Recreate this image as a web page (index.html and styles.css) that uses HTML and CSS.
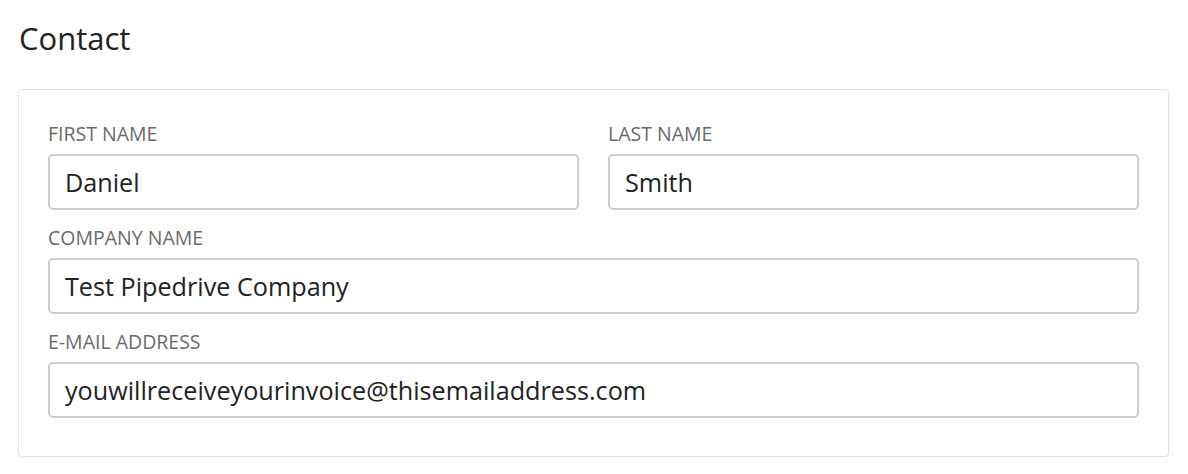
FILE: index.html
```html
<!DOCTYPE html>
<html>
<head>
<meta charset="utf-8">
<link rel="stylesheet" href="styles.css">
</head>
<body>
<div class="page">
  <h2 class="title">Contact</h2>
  <div class="card">
    <div class="row">
      <div class="field">
        <label class="label">FIRST NAME</label>
        <div class="input">Daniel</div>
      </div>
      <div class="field">
        <label class="label">LAST NAME</label>
        <div class="input">Smith</div>
      </div>
    </div>
    <div class="field">
      <label class="label">COMPANY NAME</label>
      <div class="input">Test Pipedrive Company</div>
    </div>
    <div class="field">
      <label class="label">E-MAIL ADDRESS</label>
      <div class="input">youwillreceiveyourinvoice@thisemailaddress.com</div>
    </div>
  </div>
</div>
</body>
</html>
```
FILE: styles.css
```css
html, body {
  margin: 0;
  padding: 0;
  background: #ffffff;
}
body {
  font-family: "Open Sans", "Noto Sans", sans-serif;
  color: #222222;
}
.page {
  padding: 18px 19px 0 18px;
}
.title {
  margin: 0 0 31px 1px;
  font-size: 31px;
  line-height: 40px;
  font-weight: 400;
  color: #222222;
}
.card {
  width: 1151px;
  box-sizing: border-box;
  border: 1px solid #dfe2e6;
  border-radius: 4px;
  box-shadow: 0 1px 2px rgba(0, 0, 0, 0.06);
  padding: 32px 29px 38px 29px;
  display: flex;
  flex-direction: column;
  gap: 16px;
}
.row {
  display: flex;
  gap: 29px;
}
.row .field {
  flex: 1;
}
.field {
  display: flex;
  flex-direction: column;
}
.label {
  font-size: 19.5px;
  line-height: 24px;
  color: #6a6a6a;
  margin-bottom: 8px;
}
.input {
  height: 56px;
  box-sizing: border-box;
  border: 2px solid #cccccc;
  border-radius: 5px;
  padding: 0 15px;
  display: flex;
  align-items: center;
  font-size: 25.2px;
  color: #222222;
}
```
